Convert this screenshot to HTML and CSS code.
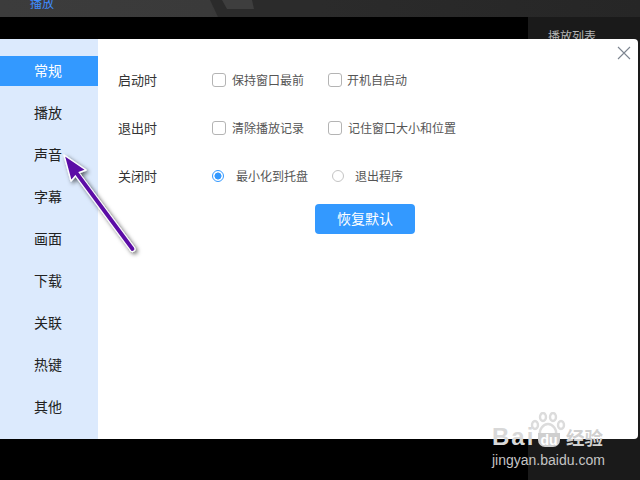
FILE: index.html
```html
<!DOCTYPE html>
<html lang="zh">
<head>
<meta charset="utf-8">
<title>设置</title>
<link rel="stylesheet" href="styles.css">
</head>
<body>
<div class="app">
  <header class="topbar">
    <span class="tab">播放</span>
    <svg class="deco" width="110" height="17" viewBox="0 0 110 17">
      <path d="M0 0H110V17H8Z" fill="#2b2b2b"/>
      <path d="M12 0H42L44 9H17Z" fill="#3e3e3e"/>
    </svg>
  </header>
  <div class="stage">
    <div class="video"></div>
    <aside class="playlist"><span class="playlist-title">播放列表</span></aside>
  </div>
  <section class="dialog">
    <nav class="nav">
      <a class="nav-item active">常规</a>
      <a class="nav-item">播放</a>
      <a class="nav-item">声音</a>
      <a class="nav-item">字幕</a>
      <a class="nav-item">画面</a>
      <a class="nav-item">下载</a>
      <a class="nav-item">关联</a>
      <a class="nav-item">热键</a>
      <a class="nav-item">其他</a>
    </nav>
    <main class="content">
      <div class="row">
        <span class="label">启动时</span>
        <span class="opt opt-a"><i class="check"></i><span class="txt">保持窗口最前</span></span>
        <span class="opt"><i class="check"></i><span class="txt">开机自启动</span></span>
      </div>
      <div class="row">
        <span class="label">退出时</span>
        <span class="opt opt-a"><i class="check"></i><span class="txt">清除播放记录</span></span>
        <span class="opt"><i class="check"></i><span class="txt">记住窗口大小和位置</span></span>
      </div>
      <div class="row">
        <span class="label">关闭时</span>
        <span class="opt opt-a"><i class="radio on"></i><span class="txt">最小化到托盘</span></span>
        <span class="opt radio-b"><i class="radio"></i><span class="txt">退出程序</span></span>
      </div>
      <div class="actions"><button class="reset">恢复默认</button></div>
    </main>
    <svg class="close" width="14" height="14" viewBox="0 0 14 14">
      <path d="M1 1L13 13M13 1L1 13" stroke="#7d8590" stroke-width="1.1" fill="none"/>
    </svg>
  </section>
  <svg class="arrow" width="110" height="120" viewBox="0 0 110 120">
    <defs>
      <filter id="sh" x="-30%" y="-30%" width="160%" height="160%">
        <feDropShadow dx="2" dy="2" stdDeviation="2" flood-color="#000" flood-opacity=".6"/>
      </filter>
    </defs>
    <g filter="url(#sh)">
      <path d="M27 24L82.500 99" stroke="#fff" stroke-width="6" stroke-linecap="round" fill="none"/>
      <path d="M14 5L36 20L28 23L21 31Z" fill="#5b0fa6" stroke="#fff" stroke-width="1.400" stroke-linejoin="round"/>
      <path d="M25 21L82.500 99" stroke="#5b0fa6" stroke-width="3.800" stroke-linecap="round" fill="none"/>
    </g>
  </svg>
  <div class="watermark">
    <svg class="paw" width="36" height="28" viewBox="0 0 36 28">
      <g fill="none" stroke="#dcdcdc" stroke-width="2.400">
        <ellipse cx="5" cy="13" rx="3" ry="4"/>
        <ellipse cx="13" cy="5" rx="3" ry="4"/>
        <ellipse cx="23" cy="5" rx="3" ry="4"/>
        <ellipse cx="31" cy="13" rx="3" ry="4"/>
        <path d="M18 12C13 12 9 18 10 22C11 27 15 25 18 25C21 25 25 27 26 22C27 18 23 12 18 12Z"/>
      </g>
    </svg>
    <div class="wm-brand"><span class="wm-bai">Bai</span><span class="wm-du">du</span><span class="wm-jy">经验</span></div>
    <div class="wm-url">jingyan.baidu.com</div>
  </div>
</div>
</body>
</html>
```
FILE: styles.css
```css
* { box-sizing: border-box; }
html, body { margin: 0; padding: 0; background: #000; }
body {
  width: 640px;
  height: 480px;
  overflow: hidden;
  font-family: "Noto Sans CJK SC", "Liberation Sans", sans-serif;
}
.app { position: relative; width: 640px; height: 480px; display: flex; flex-direction: column; }

.topbar {
  position: relative;
  height: 17px;
  flex: none;
  background: linear-gradient(90deg, #3c3c3c 0, #3a3a3a 210px, #2b2b2b 320px, #262626 640px);
}
.tab {
  position: absolute;
  left: 30px;
  top: -5px;
  font-size: 12px;
  line-height: 16px;
  color: #3f8cff;
}
.deco { position: absolute; left: 210px; top: 0; }

.stage { flex: 1; display: flex; }
.video { flex: 1; background: #000; }
.playlist { width: 112px; background: #1a1a1a; position: relative; }
.playlist-title {
  position: absolute;
  left: 20px;
  top: 11px;
  font-size: 12px;
  line-height: 16px;
  color: #b5b5b5;
}

.dialog {
  position: absolute;
  left: 0;
  top: 39px;
  width: 638px;
  height: 400px;
  display: flex;
  background: #fff;
  border-radius: 0 4px 4px 0;
  overflow: hidden;
}
.nav {
  width: 98px;
  flex: none;
  background: #dceafd;
  padding-top: 17px;
  display: flex;
  flex-direction: column;
  gap: 12px;
}
.nav-item {
  height: 30px;
  line-height: 28px;
  padding-left: 34px;
  font-size: 14px;
  color: #222;
}
.nav-item.active { background: #3399ff; color: #fff; }

.content { flex: 1; padding: 17px 0 0 20px; }
.row {
  height: 48px;
  display: flex;
  align-items: center;
}
.label { width: 94px; padding-bottom: 2px; font-size: 13px; color: #333; }
.opt {
  display: flex;
  align-items: center;
  font-size: 12px;
  color: #555;
}
.txt { padding-bottom: 2px; }
.opt-a { width: 116px; }
.check {
  width: 14px;
  height: 14px;
  margin-right: 6px;
  border: 1px solid #b4b4b4;
  border-radius: 3px;
  background: #fff;
}
.row:first-child .opt:last-child .check { margin-right: 5px; }
.radio {
  width: 12px;
  height: 12px;
  margin-right: 12px;
  border: 1px solid #c4c4c4;
  border-radius: 50%;
  background: #fff;
}
.radio.on {
  border-color: #3399ff;
  background: radial-gradient(circle, #3399ff 0 3.200px, #fff 3.800px);
}
.radio-b { margin-left: 4px; }
.radio-b .radio { margin-right: 11px; }
.actions { padding: 4px 0 0 197px; }
.reset {
  display: block;
  width: 100px;
  height: 30px;
  padding: 0 0 2px;
  border: 0;
  border-radius: 4px;
  background: #3399ff;
  color: #fff;
  font: 14px/28px "Noto Sans CJK SC", sans-serif;
}
.close { position: absolute; left: 617px; top: 7px; }

.arrow { position: absolute; left: 50px; top: 150px; }

.watermark {
  position: absolute;
  left: 492px;
  top: 411px;
  width: 140px;
  height: 60px;
  color: #d6d6d6;
}
.paw { position: absolute; left: 38px; top: 1px; }
.wm-brand {
  position: absolute;
  left: 0;
  top: 15px;
  display: flex;
  align-items: baseline;
  font-family: "Liberation Sans", sans-serif;
  font-weight: 700;
  line-height: 22px;
  white-space: nowrap;
}
.wm-bai { width: 46px; font-size: 24px; letter-spacing: 2px; color: #d8d8d8; }
.wm-du {
  width: 22px;
  text-align: center;
  font-size: 14px;
  line-height: 14px;
  border-radius: 0 0 7px 7px;
  background: #cfcfcf;
  color: #fff;
}
.wm-jy {
  margin-left: 6px;
  font-family: "Noto Sans CJK SC", sans-serif;
  font-size: 18.500px;
  color: #d0d0d0;
}
.wm-url {
  position: absolute;
  left: 0;
  top: 41px;
  font-family: "Liberation Sans", sans-serif;
  font-size: 14px;
  line-height: 16px;
  white-space: nowrap;
  color: #c4c4c4;
}
```
